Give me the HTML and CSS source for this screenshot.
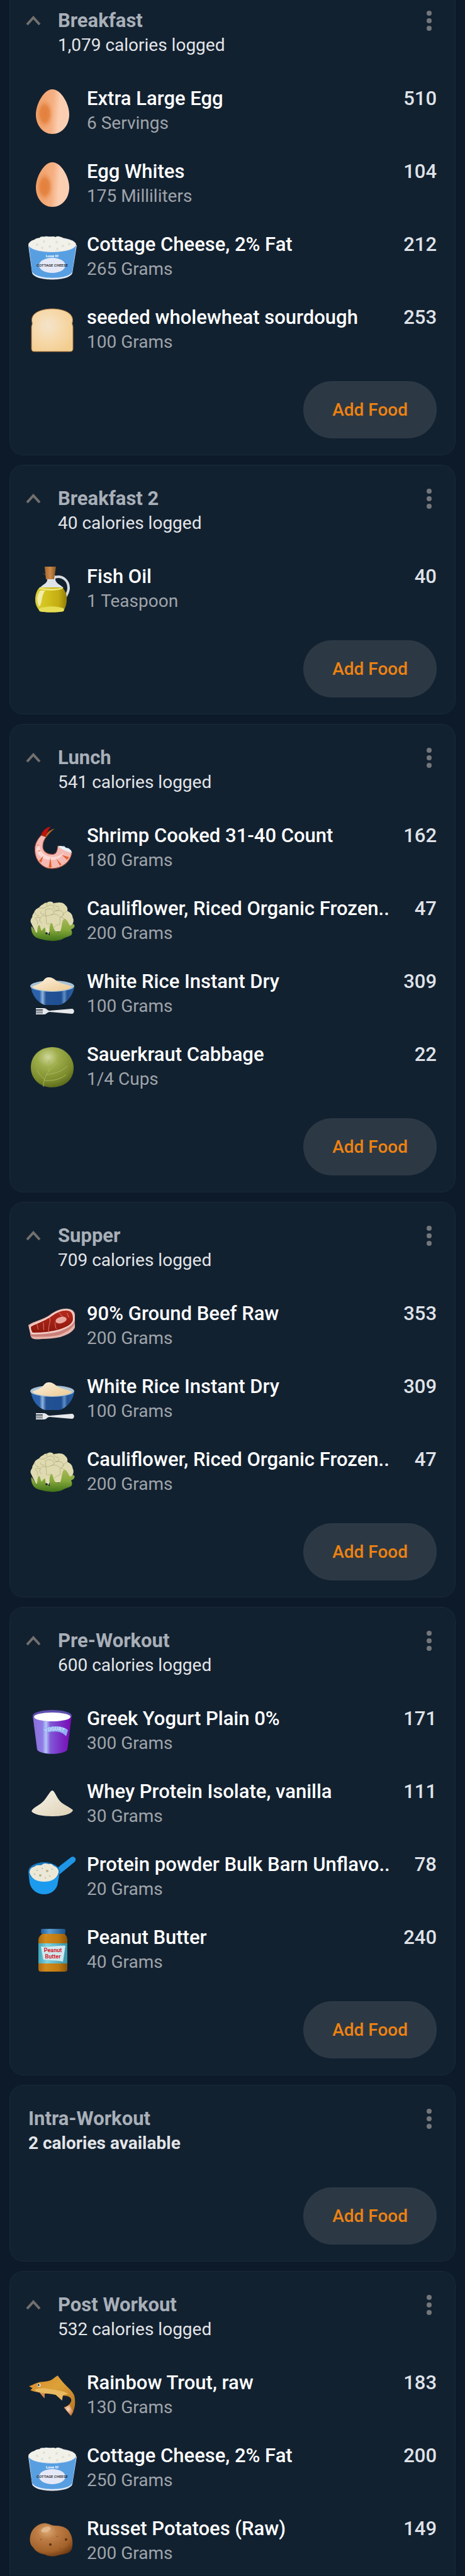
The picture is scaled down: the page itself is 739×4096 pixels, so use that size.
FILE: index.html
```html
<!DOCTYPE html>
<html lang="en">
<head>
  <meta charset="UTF-8" />
  <meta name="viewport" content="width=device-width, initial-scale=1.0" />
  <title>Food Log</title>
  <link rel="stylesheet" href="styles.css">
</head>
<body>
  <!-- gradients used by the icons -->
  <svg class="gradients" aria-hidden="true">
    <defs>
      <linearGradient id="g-egg" x1="0" x2="1" y1="0.4" y2="0.5">
        <stop offset="0" stop-color="#f0a069"/><stop offset="0.5" stop-color="#f5b083"/><stop offset="0.7" stop-color="#fbceb0"/><stop offset="1" stop-color="#fbcfb3"/>
      </linearGradient>
      <radialGradient id="g-eggdark">
        <stop offset="0" stop-color="#e27f3b"/><stop offset="0.5" stop-color="#e4823f" stop-opacity="0.9"/><stop offset="1" stop-color="#f0a069" stop-opacity="0"/>
      </radialGradient>
      <radialGradient id="g-bread" cx="0.4" cy="0.4" r="0.7">
        <stop offset="0" stop-color="#f4e4cb"/><stop offset="0.5" stop-color="#f6d9ab"/><stop offset="1" stop-color="#f3cd8f"/>
      </radialGradient>
      <linearGradient id="g-oil" x1="0" x2="1" y1="0" y2="0">
        <stop offset="0" stop-color="#d9cf3c"/><stop offset="0.35" stop-color="#d3c21d"/><stop offset="0.75" stop-color="#c4ac12"/><stop offset="1" stop-color="#8f7d08"/>
      </linearGradient>
      <linearGradient id="g-cork" x1="0" x2="1" y1="0" y2="0">
        <stop offset="0" stop-color="#a9682a"/><stop offset="0.5" stop-color="#c98a4b"/><stop offset="1" stop-color="#8a5420"/>
      </linearGradient>
      <linearGradient id="g-leaf" x1="0" x2="0" y1="0" y2="1">
        <stop offset="0" stop-color="#a9b85a"/><stop offset="0.5" stop-color="#85a83a"/><stop offset="1" stop-color="#3f7319"/>
      </linearGradient>
      <linearGradient id="g-bowl" x1="0" x2="1" y1="0" y2="0">
        <stop offset="0" stop-color="#2a62ab"/><stop offset="0.2" stop-color="#2a62ab"/><stop offset="0.27" stop-color="#8fb3dc"/><stop offset="0.35" stop-color="#235294"/><stop offset="0.7" stop-color="#1f4f93"/><stop offset="0.77" stop-color="#5f8dc4"/><stop offset="0.84" stop-color="#235294"/><stop offset="1" stop-color="#2a62ab"/>
      </linearGradient>
      <linearGradient id="g-grain" x1="0" x2="1" y1="0" y2="1">
        <stop offset="0" stop-color="#fdf3e0"/><stop offset="1" stop-color="#ecc891"/>
      </linearGradient>
      <radialGradient id="g-cabbage" cx="0.4" cy="0.25" r="0.8">
        <stop offset="0" stop-color="#cfd79b"/><stop offset="0.3" stop-color="#9fae4c"/><stop offset="0.75" stop-color="#7b8b2b"/><stop offset="1" stop-color="#56641a"/>
      </radialGradient>
      <linearGradient id="g-yogurt" x1="0" x2="1" y1="0" y2="0">
        <stop offset="0" stop-color="#8a6cdc"/><stop offset="0.25" stop-color="#8f7ce6"/><stop offset="0.34" stop-color="#b5c8f8"/><stop offset="0.45" stop-color="#8258d8"/><stop offset="0.75" stop-color="#7a28c2"/><stop offset="1" stop-color="#7a08b4"/>
      </linearGradient>
      <linearGradient id="g-jar" x1="0" x2="1" y1="0" y2="0">
        <stop offset="0" stop-color="#a96a10"/><stop offset="0.25" stop-color="#d18a1c"/><stop offset="0.7" stop-color="#c07a10"/><stop offset="1" stop-color="#8a5407"/>
      </linearGradient>
      <linearGradient id="g-lid" x1="0" x2="1" y1="0" y2="0">
        <stop offset="0" stop-color="#1d5c98"/><stop offset="0.35" stop-color="#5d9fd2"/><stop offset="1" stop-color="#1b5187"/>
      </linearGradient>
      <linearGradient id="g-jarlabel" x1="0" x2="1" y1="0" y2="0">
        <stop offset="0" stop-color="#3fa3b8"/><stop offset="0.3" stop-color="#7fd3df"/><stop offset="1" stop-color="#3793a8"/>
      </linearGradient>
      <linearGradient id="g-trout" x1="0" x2="1" y1="0" y2="1">
        <stop offset="0" stop-color="#dd8a2e"/><stop offset="0.45" stop-color="#dba238"/><stop offset="1" stop-color="#b4701f"/>
      </linearGradient>
      <radialGradient id="g-potato" cx="0.4" cy="0.25" r="0.8">
        <stop offset="0" stop-color="#dca873"/><stop offset="0.3" stop-color="#bd7d45"/><stop offset="0.75" stop-color="#a3622b"/><stop offset="1" stop-color="#6e3a12"/>
      </radialGradient>
      <radialGradient id="g-tail" cx="0.45" cy="0.4" r="0.6">
        <stop offset="0" stop-color="#f7dcc4"/><stop offset="1" stop-color="#cc7433"/>
      </radialGradient>
      <linearGradient id="g-red" x1="0" x2="0" y1="0" y2="1">
        <stop offset="0" stop-color="#b62a1d"/><stop offset="1" stop-color="#8f170c"/>
      </linearGradient>
      <linearGradient id="g-powder" x1="0" x2="1" y1="0" y2="1">
        <stop offset="0" stop-color="#f8f4ea"/><stop offset="1" stop-color="#ddd0b4"/>
      </linearGradient>
    </defs>
  </svg>

  <!-- icons -->
  <svg class="sprite" aria-hidden="true">
    <symbol id="chevron" viewBox="0 0 24 16">
      <path d="M2 14 L12 3 L22 14" fill="none" stroke="#72706e" stroke-width="4"/>
    </symbol>

    <symbol id="dots" viewBox="0 0 24 36">
      <g fill="#73777a"><circle cx="12" cy="6" r="4"/><circle cx="12" cy="18" r="4"/><circle cx="12" cy="30" r="4"/></g>
    </symbol>

    <symbol id="egg" viewBox="0 0 80 80">
      <path d="M40 5C54 5 67 28 67 45C67 63 55 76 40 76C26 76 14 63 14 45C14 28 27 5 40 5Z" fill="url(#g-egg)"/>
      <ellipse cx="28" cy="44" rx="14" ry="25" fill="url(#g-eggdark)"/>
    </symbol>

    <symbol id="cottage" viewBox="0 0 80 80">
      <path d="M2 21L8 65C12 79 68 79 72 65L79 21Z" fill="#e3eaf6"/>
      <path d="M3 22L8 63C14 76 67 76 72 63L78 22Z" fill="#589fe2"/>
      <ellipse cx="40" cy="20" rx="38" ry="12" fill="#e4e6ea"/>
      <path d="M3 20C4 14 9 14 12 12C15 9 18 10 20 9C23 6 26 8 29 7C32 6 34 8 37 7C40 8 42 6 45 8C48 6 51 7 54 8C57 8 58 11 61 12C64 11 66 13 68 14C73 14 77 16 77 20C74 34 6 34 3 20Z" fill="#f1f1ea"/>
      <g fill="#e0e1d4"><circle cx="16" cy="20" r="2"/><circle cx="27" cy="15" r="2"/><circle cx="36" cy="23" r="2"/><circle cx="47" cy="16" r="2"/><circle cx="57" cy="22" r="2"/><circle cx="67" cy="19" r="2"/><circle cx="24" cy="25" r="2"/><circle cx="48" cy="27" r="2"/></g>
      <ellipse cx="40" cy="53" rx="21" ry="12" fill="#e5e8f7"/>
      <text x="40" y="40" font-size="6" font-weight="700" fill="#fff" text-anchor="middle">Lose It!</text>
      <text x="40" y="55" font-size="6" font-weight="500" fill="#111" text-anchor="middle">COTTAGE CHEESE</text>
    </symbol>

    <symbol id="bread" viewBox="0 0 80 80">
      <path d="M12 74C8 74 7 72 7 69V35C7 31 9 31 8 28C4 12 24 6 40 6C56 6 76 12 72 28C71 31 73 31 73 35V69C73 72 72 74 68 74Z" fill="url(#g-bread)" stroke="#a8733a" stroke-width="1"/>
    </symbol>

    <symbol id="oil" viewBox="0 0 80 80">
      <path d="M44 21C56 17 66 26 66 38C66 44 63 49 60 54" fill="none" stroke="#d8dde3" stroke-width="4"/>
      <path d="M24 14L32 18V26C31 31 24 33 20 38H58C54 33 46 31 45 25V18H31Z" fill="#dfe3e8"/>
      <path d="M20 37H56C61 43 64 49 63 57C63 65 60 70 58 75C50 77 28 77 20 75C17 70 13 65 13 57C13 49 15 42 20 37Z" fill="url(#g-oil)"/>
      <path d="M20 37C32 40 46 40 56 37L57 39C46 43 31 43 19 39Z" fill="#ece77c"/>
      <path d="M19 71C30 66 48 66 59 71L58 75C46 77 30 77 20 75Z" fill="#e6dd55"/>
      <path d="M21 42C15 50 15 59 19 67C24 66 22 50 29 42Z" fill="#f1eca8"/>
      <path d="M28 4H46L43 24H30Z" fill="url(#g-cork)"/>
    </symbol>

    <symbol id="shrimp" viewBox="0 0 80 80">
      <g transform="translate(-3 -2) scale(.1714)">
        <path d="M186 130C205 90 235 70 275 62C250 75 225 105 195 140Z" fill="#b5651e"/>
        <path d="M148 124C110 165 88 205 90 262C94 360 160 432 250 432C345 430 420 370 432 284L302 226C300 262 292 298 258 300C200 302 162 270 163 225C164 190 178 160 195 138Z" fill="#f5b9b3" stroke="#a5543c" stroke-width="6"/>
        <path d="M104 262C112 300 150 340 210 350C280 362 340 330 362 280C320 320 280 330 230 322C170 312 135 270 134 220C118 225 102 240 104 262Z" fill="#fbdad6"/>
        <path d="M147 118C165 80 190 52 238 42C218 64 205 90 188 136Z" fill="#c3100c"/>
        <path d="M128 362L168 314L150 376ZM218 422L234 328L246 422ZM322 406L288 340L336 392ZM388 350L340 306L408 326ZM110 274L130 262L146 268ZM104 216L122 212L132 219Z" fill="#e5602b"/>
        <path d="M302 226C320 216 344 228 365 224C374 250 402 230 414 254C430 262 430 276 432 286C390 278 340 256 302 226Z" fill="#e9f0f5"/>
      </g>
    </symbol>

    <symbol id="cauliflower" viewBox="0 0 80 80">
      <g transform="translate(-3 -118) scale(.1714)">
        <path d="M56 940C40 910 60 895 66 880C64 860 80 850 86 830C96 805 120 800 132 790C150 765 165 770 175 756C190 745 200 752 206 745C225 735 250 735 262 752C290 752 300 742 330 748C360 750 370 770 385 785C395 800 392 820 392 826C420 840 440 860 440 885C452 905 450 930 440 945L420 1010L100 1030Z" fill="#dfdab0"/>
        <g fill="none" stroke="#aaa476" stroke-width="4">
          <path d="M206 746C195 765 200 775 206 780M206 780C190 800 150 805 130 795M206 780C235 765 255 770 266 785M262 752C268 770 280 785 304 783M266 785C262 810 280 822 310 818M188 815C185 840 195 860 190 870M188 815C220 795 255 805 266 830C270 850 250 860 235 862C215 875 200 870 190 870M270 835C300 812 350 820 354 850C350 870 335 880 325 885M190 870C165 865 150 870 140 890M140 890C120 880 100 885 90 895M140 890C130 915 135 930 155 936M190 870C200 900 195 920 196 940M325 885C318 915 330 940 320 950M325 885C300 850 270 850 240 862M95 900C110 905 120 925 112 950M196 940C215 955 230 940 235 935M320 950C300 950 280 965 268 980M392 826C370 835 355 850 350 870M88 836C95 860 110 870 130 872M145 830C140 845 150 865 180 850M304 783C320 800 310 815 310 818M330 880C350 890 360 895 362 900"/>
        </g>
        <path d="M56 970C70 965 80 1010 108 1032C118 1000 110 965 130 955C145 970 140 1000 155 1008C165 990 175 980 183 978C192 1000 186 1030 192 1045L210 1035L228 1054C225 1000 222 945 245 936C262 945 258 1000 285 1015C300 1022 318 1022 326 1012C345 970 335 910 365 897C395 905 405 960 420 962C432 945 460 940 458 965C455 985 435 992 425 998C440 1020 435 1045 425 1052C400 1066 370 1070 350 1084C320 1100 280 1102 250 1104C190 1100 150 1090 120 1080C70 1060 55 1020 56 970Z" fill="url(#g-leaf)"/>
        <path d="M196 980L206 1030L222 1038L214 980Z" fill="#e5e0bc"/>
      </g>
    </symbol>

    <symbol id="rice" viewBox="0 0 80 80">
      <path d="M6 27C8 46 22 56 29 57H51C58 56 73 46 75 27Z" fill="url(#g-bowl)"/>
      <ellipse cx="40" cy="27" rx="35" ry="9" fill="#a9c3d6"/>
      <path d="M8 28C16 24 22 23 26 18C29 14 31 13 35 13C39 13 43 15 46 18C52 23 64 24 72 28C64 37 17 37 8 28Z" fill="url(#g-grain)"/>
      <path d="M14 62H27C31 62 32 66 36 66L71 63C76 63 76 71 71 71L36 68C32 68 31 72 27 72H14V70H25V69H14V67H25V66H14V65H25V64H14Z" fill="#e6e8eb"/>
    </symbol>

    <symbol id="cabbage" viewBox="0 0 80 80">
      <path d="M40 8C60 8 74 24 74 41C74 60 60 72 38 72C18 71 6 57 6 40C6 22 20 8 40 8Z" fill="url(#g-cabbage)"/>
      <path d="M26 71C26 58 31 46 50 32M28 59C22 54 18 50 16 45M30 52C42 50 54 48 64 38M34 46C33 40 33 34 36 28M28 61C44 62 54 58 62 52" fill="none" stroke="#a9b660" stroke-width="1"/>
    </symbol>

    <symbol id="beef" viewBox="0 0 80 80">
      <path d="M2 38C10 32 24 30 36 22C44 16 54 11 65 12C74 13 77 18 76 26V42C72 50 62 54 53 57C44 59 34 60 24 60C14 61 8 61 6 56Z" fill="#e7b2aa"/>
      <path d="M5 53C22 53 40 52 52 48C62 44 72 40 76 31V35C72 44 62 49 53 53C40 57 20 57 6 56Z" fill="#c98078"/>
      <path d="M5 40C12 35 26 32 37 24C46 17 55 13 65 14C73 15 74 22 74 28C74 38 62 42 51 46C38 50 22 51 9 51C6 49 5 44 5 40Z" fill="url(#g-red)" stroke="#f3d3cc" stroke-width="2"/>
      <ellipse cx="54" cy="30" rx="9" ry="5" fill="#e9a79f" transform="rotate(-15 54 30)"/>
      <path d="M36 26C38 34 34 36 34 50M50 18C54 20 54 24 58 25M15 36C18 40 16 42 18 45M26 34C27 38 25 42 27 46M44 34C46 38 44 42 47 44M63 19C66 21 64 24 67 26" fill="none" stroke="#d98277" stroke-width="1"/>
    </symbol>

    <symbol id="yogurt" viewBox="0 0 80 80">
      <path d="M9 15L16 69C20 78 60 78 64 69L71 15Z" fill="url(#g-yogurt)"/>
      <ellipse cx="40" cy="15" rx="31" ry="9" fill="#5f4fb0"/>
      <ellipse cx="40" cy="17" rx="29" ry="7" fill="#fff"/>
      <path d="M27 36C38 31 56 30 65 38L62 48C54 38 40 40 30 42Z" fill="#8fb0f2"/>
      <path id="yogurt-arc" d="M29 42C38 37 54 36 63 45" fill="none"/>
      <text font-size="8" fill="#e4edfd"><textPath href="#yogurt-arc">YOGURT</textPath></text>
    </symbol>

    <symbol id="powder" viewBox="0 0 80 80">
      <path d="M40 18C43 18 46 26 50 32C55 40 66 43 73 49C71 56 56 59 40 59C24 59 10 56 7 51C9 45 20 42 27 34C33 27 37 18 40 18Z" fill="url(#g-powder)"/>
    </symbol>

    <symbol id="scoop" viewBox="0 0 80 80">
      <path d="M44 30L52 22L70 8C76 5 80 12 75 16L52 35Z" fill="#1f95e6"/>
      <path d="M2 31L4 48C6 60 16 67 27 67C38 67 48 60 49 48L52 31Z" fill="#1c9bee"/>
      <ellipse cx="27" cy="31" rx="25" ry="15" fill="#1878bd"/>
      <path d="M4 33C4 26 8 24 12 23C15 19 20 22 24 20C28 16 32 19 36 19C40 18 41 22 45 23C48 25 51 28 50 33C47 43 38 47 27 47C15 47 7 42 4 33Z" fill="#ece8d8"/>
      <g fill="#b9b294"><circle cx="16" cy="29" r="1"/><circle cx="24" cy="26" r="1"/><circle cx="32" cy="30" r="2"/><circle cx="21" cy="37" r="2"/><circle cx="40" cy="27" r="1"/><circle cx="36" cy="38" r="1"/><circle cx="12" cy="35" r="1"/><circle cx="29" cy="41" r="1"/></g>
    </symbol>

    <symbol id="peanut" viewBox="0 0 80 80">
      <path d="M24 14H60C63 18 64 20 64 24V70C64 73 62 74 60 74H22C20 74 18 73 18 70V24C18 20 20 17 24 14Z" fill="url(#g-jar)"/>
      <rect x="22" y="6" width="39" height="8" rx="2" fill="url(#g-lid)"/>
      <rect x="18" y="29" width="46" height="32" fill="url(#g-jarlabel)"/>
      <path d="M22 34C34 36 48 32 61 33L57 58C46 56 36 56 26 55Z" fill="#cfe9ef"/>
      <g font-size="9" font-weight="700" fill="#d4212b" text-anchor="middle"><text x="41" y="43">Peanut</text><text x="41" y="53">Butter</text></g>
    </symbol>

    <symbol id="trout" viewBox="0 0 80 80">
      <g transform="translate(-3 1) scale(.1714)">
        <path d="M36 142C80 125 110 105 145 102C190 98 230 96 262 70C280 55 292 48 302 42C320 70 350 105 380 135C410 165 440 190 454 225C465 260 465 320 455 345C448 375 436 400 424 416L360 338C400 325 425 300 428 270C428 240 385 225 348 230L342 276L285 222C250 212 210 208 180 210L178 252L134 200C100 195 70 190 48 178L68 160Z" fill="url(#g-trout)"/>
        <path d="M90 172C130 155 190 158 240 170C310 178 370 190 400 212C370 218 355 224 348 230L342 272L285 222C230 205 180 208 134 200C110 195 95 185 90 172Z" fill="#e8ba62"/>
        <path d="M134 200L180 210L178 252Z" fill="#d28a52"/>
        <path d="M360 338C385 332 400 322 412 312L444 380L424 416Z" fill="url(#g-tail)"/>
        <circle cx="128" cy="131" r="15" fill="#eef2f4"/><circle cx="125" cy="131" r="8" fill="#16202a"/>
      </g>
    </symbol>

    <symbol id="potato" viewBox="0 0 80 80">
      <path d="M28 11C34 11 38 15 46 15C58 15 66 20 69 28C73 36 73 46 71 52C68 60 58 60 50 62C42 65 34 64 29 61C22 60 14 57 10 50C3 44 4 34 6 28C8 20 18 11 28 11Z" fill="url(#g-potato)"/>
      <ellipse cx="30" cy="21" rx="8" ry="4" fill="#e8c6a0" opacity="0.7" transform="rotate(-20 30 21)"/>
      <g fill="#5e3010"><circle cx="62" cy="37" r="2"/><circle cx="37" cy="45" r="2"/></g>
      <g fill="#8c5526"><circle cx="22" cy="37" r="1"/><circle cx="48" cy="32" r="1"/><circle cx="52" cy="51" r="1"/></g>
    </symbol>
  </svg>

  <main class="diary">
    <section class="meal meal-first">
      <header class="meal-header">
        <button class="toggle" aria-label="Collapse Breakfast"><svg><use href="#chevron"/></svg></button>
        <div class="meal-title"><h2>Breakfast</h2><p>1,079 calories logged</p></div>
        <button class="menu" aria-label="Breakfast options"><svg><use href="#dots"/></svg></button>
      </header>
      <ul class="foods">
        <li class="food"><svg class="icon"><use href="#egg"/></svg><div class="info"><h3>Extra Large Egg</h3><p>6 Servings</p></div><span class="calories">510</span></li>
        <li class="food"><svg class="icon"><use href="#egg"/></svg><div class="info"><h3>Egg Whites</h3><p>175 Milliliters</p></div><span class="calories">104</span></li>
        <li class="food"><svg class="icon"><use href="#cottage"/></svg><div class="info"><h3>Cottage Cheese, 2% Fat</h3><p>265 Grams</p></div><span class="calories">212</span></li>
        <li class="food"><svg class="icon"><use href="#bread"/></svg><div class="info"><h3>seeded wholewheat sourdough</h3><p>100 Grams</p></div><span class="calories">253</span></li>
      </ul>
      <button class="add-food">Add Food</button>
    </section>

    <section class="meal">
      <header class="meal-header">
        <button class="toggle" aria-label="Collapse Breakfast 2"><svg><use href="#chevron"/></svg></button>
        <div class="meal-title"><h2>Breakfast 2</h2><p>40 calories logged</p></div>
        <button class="menu" aria-label="Breakfast 2 options"><svg><use href="#dots"/></svg></button>
      </header>
      <ul class="foods">
        <li class="food"><svg class="icon"><use href="#oil"/></svg><div class="info"><h3>Fish Oil</h3><p>1 Teaspoon</p></div><span class="calories">40</span></li>
      </ul>
      <button class="add-food">Add Food</button>
    </section>

    <section class="meal">
      <header class="meal-header">
        <button class="toggle" aria-label="Collapse Lunch"><svg><use href="#chevron"/></svg></button>
        <div class="meal-title"><h2>Lunch</h2><p>541 calories logged</p></div>
        <button class="menu" aria-label="Lunch options"><svg><use href="#dots"/></svg></button>
      </header>
      <ul class="foods">
        <li class="food"><svg class="icon"><use href="#shrimp"/></svg><div class="info"><h3>Shrimp Cooked 31-40 Count</h3><p>180 Grams</p></div><span class="calories">162</span></li>
        <li class="food"><svg class="icon"><use href="#cauliflower"/></svg><div class="info"><h3>Cauliflower, Riced Organic Frozen..</h3><p>200 Grams</p></div><span class="calories">47</span></li>
        <li class="food"><svg class="icon"><use href="#rice"/></svg><div class="info"><h3>White Rice Instant Dry</h3><p>100 Grams</p></div><span class="calories">309</span></li>
        <li class="food"><svg class="icon"><use href="#cabbage"/></svg><div class="info"><h3>Sauerkraut Cabbage</h3><p>1/4 Cups</p></div><span class="calories">22</span></li>
      </ul>
      <button class="add-food">Add Food</button>
    </section>

    <section class="meal">
      <header class="meal-header">
        <button class="toggle" aria-label="Collapse Supper"><svg><use href="#chevron"/></svg></button>
        <div class="meal-title"><h2>Supper</h2><p>709 calories logged</p></div>
        <button class="menu" aria-label="Supper options"><svg><use href="#dots"/></svg></button>
      </header>
      <ul class="foods">
        <li class="food"><svg class="icon"><use href="#beef"/></svg><div class="info"><h3>90% Ground Beef Raw</h3><p>200 Grams</p></div><span class="calories">353</span></li>
        <li class="food"><svg class="icon"><use href="#rice"/></svg><div class="info"><h3>White Rice Instant Dry</h3><p>100 Grams</p></div><span class="calories">309</span></li>
        <li class="food"><svg class="icon"><use href="#cauliflower"/></svg><div class="info"><h3>Cauliflower, Riced Organic Frozen..</h3><p>200 Grams</p></div><span class="calories">47</span></li>
      </ul>
      <button class="add-food">Add Food</button>
    </section>

    <section class="meal">
      <header class="meal-header">
        <button class="toggle" aria-label="Collapse Pre-Workout"><svg><use href="#chevron"/></svg></button>
        <div class="meal-title"><h2>Pre-Workout</h2><p>600 calories logged</p></div>
        <button class="menu" aria-label="Pre-Workout options"><svg><use href="#dots"/></svg></button>
      </header>
      <ul class="foods">
        <li class="food"><svg class="icon"><use href="#yogurt"/></svg><div class="info"><h3>Greek Yogurt Plain 0%</h3><p>300 Grams</p></div><span class="calories">171</span></li>
        <li class="food"><svg class="icon"><use href="#powder"/></svg><div class="info"><h3>Whey Protein Isolate, vanilla</h3><p>30 Grams</p></div><span class="calories">111</span></li>
        <li class="food"><svg class="icon"><use href="#scoop"/></svg><div class="info"><h3>Protein powder Bulk Barn Unflavo..</h3><p>20 Grams</p></div><span class="calories">78</span></li>
        <li class="food"><svg class="icon"><use href="#peanut"/></svg><div class="info"><h3>Peanut Butter</h3><p>40 Grams</p></div><span class="calories">240</span></li>
      </ul>
      <button class="add-food">Add Food</button>
    </section>

    <section class="meal">
      <header class="meal-header">
        <div class="meal-title"><h2>Intra-Workout</h2><p class="available">2 calories available</p></div>
        <button class="menu" aria-label="Intra-Workout options"><svg><use href="#dots"/></svg></button>
      </header>
      <button class="add-food">Add Food</button>
    </section>

    <section class="meal meal-last">
      <header class="meal-header">
        <button class="toggle" aria-label="Collapse Post Workout"><svg><use href="#chevron"/></svg></button>
        <div class="meal-title"><h2>Post Workout</h2><p>532 calories logged</p></div>
        <button class="menu" aria-label="Post Workout options"><svg><use href="#dots"/></svg></button>
      </header>
      <ul class="foods">
        <li class="food"><svg class="icon"><use href="#trout"/></svg><div class="info"><h3>Rainbow Trout, raw</h3><p>130 Grams</p></div><span class="calories">183</span></li>
        <li class="food"><svg class="icon"><use href="#cottage"/></svg><div class="info"><h3>Cottage Cheese, 2% Fat</h3><p>250 Grams</p></div><span class="calories">200</span></li>
        <li class="food"><svg class="icon"><use href="#potato"/></svg><div class="info"><h3>Russet Potatoes (Raw)</h3><p>200 Grams</p></div><span class="calories">149</span></li>
      </ul>
    </section>
  </main>
</body>
</html>
```
FILE: styles.css
```css
* {
  box-sizing: border-box;
}
body {
  margin: 0;
  background: #0c1a29;
  font-family: Roboto, "Liberation Sans", sans-serif;
}
h2, h3, p, ul {
  margin: 0;
  padding: 0;
}
button {
  padding: 0;
  border: 0;
  background: none;
  font-family: inherit;
  cursor: pointer;
}
.gradients {
  position: absolute;
  width: 0;
  height: 0;
}
.sprite {
  display: none;
}
.diary {
  display: flex;
  flex-direction: column;
  gap: 15px;
  padding: 0 15px;
}
.meal {
  display: flex;
  flex-direction: column;
  padding: 33px 29px 26px;
  background: #122130;
  border: 1px solid #1a2a37;
  border-radius: 22px;
}
.meal-first {
  padding-top: 13px;
  border-top: 0;
  border-radius: 0 0 22px 22px;
}
.meal-last {
  padding-bottom: 0;
  border-bottom: 0;
  border-radius: 22px 22px 0 0;
}
.meal-header {
  display: flex;
  align-items: flex-start;
  margin-bottom: 28px;
}
.toggle {
  display: flex;
  align-items: center;
  height: 40px;
  margin-left: -4px;
  margin-right: 27px;
}
.toggle svg {
  width: 24px;
  height: 16px;
}
.meal-title {
  flex: 1;
  line-height: 39px;
}
.meal-title h2 {
  font-size: 31px;
  font-weight: 700;
  color: #a8afb8;
}
.meal-title p {
  font-size: 28px;
  color: #e3e5e8;
}
.meal-title .available {
  font-weight: 700;
}
.menu {
  display: flex;
  align-items: center;
  height: 40px;
}
.menu svg {
  width: 24px;
  height: 36px;
}
.foods {
  list-style: none;
}
.food {
  display: flex;
  gap: 15px;
  margin-left: -2px;
  padding: 18px 0;
}
.meal-last .food:last-child {
  padding-bottom: 14px;
}
.icon {
  flex: none;
  width: 80px;
  height: 80px;
}
.info {
  flex: 1;
  min-width: 0;
  line-height: 39px;
}
.info h3 {
  white-space: nowrap;
  font-size: 31px;
  font-weight: 500;
  color: #fff;
}
.info p {
  font-size: 28px;
  color: #9fa4aa;
}
.calories {
  font-size: 31px;
  font-weight: 500;
  line-height: 39px;
  color: #dfe2e8;
}
.add-food {
  align-self: flex-end;
  margin-top: 23px;
  padding: 0 46px;
  height: 91px;
  border-radius: 46px;
  background: #2c3945;
  color: #f08210;
  font-size: 28px;
  font-weight: 500;
}
```
